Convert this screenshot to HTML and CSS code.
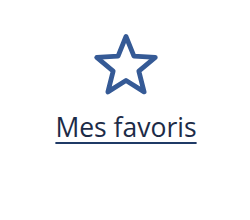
FILE: index.html
```html
<!DOCTYPE html>
<html lang="fr">
<head>
<meta charset="utf-8">
<link rel="stylesheet" href="styles.css">
</head>
<body>
<div class="card">
  <svg class="star" width="66" height="64" viewBox="0 0 66 64" aria-hidden="true">
    <path d="M33 3.5 L40.94 23.08 L62.3 24.42 L45.84 38.17 L51.1 58.9 L33 47.5 L14.9 58.9 L20.16 38.17 L3.7 24.42 L25.06 23.08 Z" fill="none" stroke="#355a96" stroke-width="4.8" stroke-linejoin="round"/>
  </svg>
  <a class="link" href="#">Mes favoris</a>
</div>
</body>
</html>
```
FILE: styles.css
```css
html, body {
  margin: 0;
  padding: 0;
  background: #ffffff;
}
.card {
  width: 250px;
  height: 220px;
  display: flex;
  flex-direction: column;
  align-items: center;
  padding-top: 33px;
  box-sizing: border-box;
}
.star {
  display: block;
  margin-left: 2px;
}
.link {
  margin-top: 12px;
  margin-left: 2px;
  font-family: "Open Sans", sans-serif;
  font-size: 26.5px;
  color: #1c2b47;
  text-decoration: underline;
  text-decoration-color: #1f3a66;
  text-decoration-thickness: 2px;
  text-underline-offset: 5px;
}
```
